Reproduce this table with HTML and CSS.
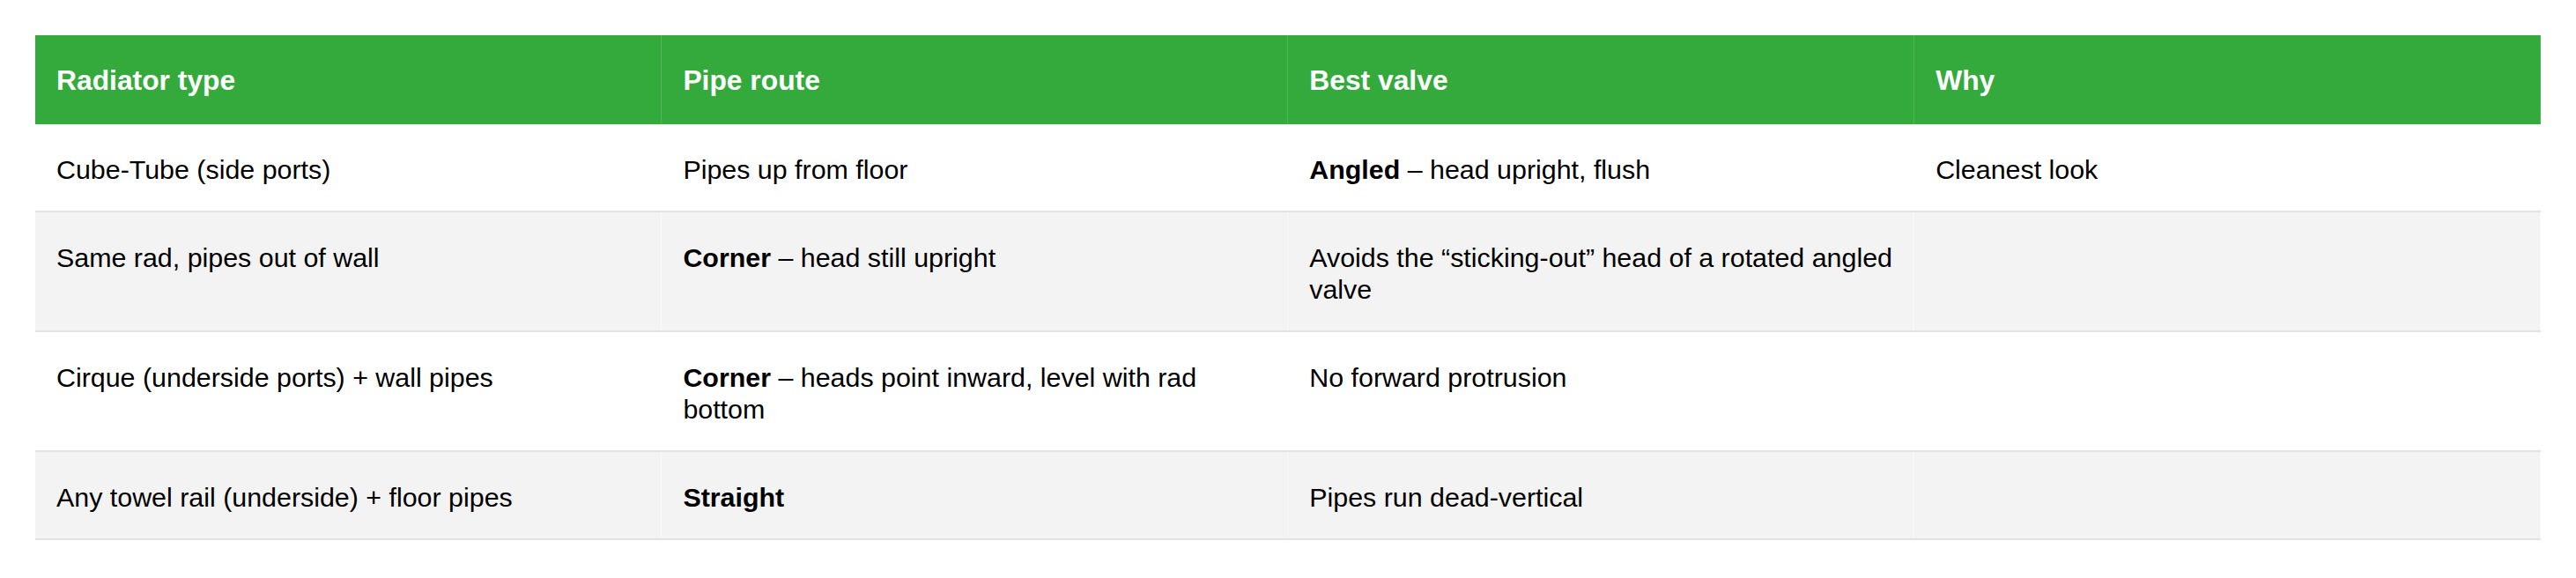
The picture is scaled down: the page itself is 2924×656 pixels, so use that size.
FILE: index.html
```html
<!DOCTYPE html>
<html lang="en">
<head>
<meta charset="utf-8">
<title>Radiator valves</title>
<link rel="stylesheet" href="styles.css">
</head>
<body>
<div class="wrap">
<table class="valves">
  <thead>
    <tr>
      <th>Radiator type</th>
      <th>Pipe route</th>
      <th>Best valve</th>
      <th>Why</th>
    </tr>
  </thead>
  <tbody>
    <tr>
      <td>Cube-Tube (side ports)</td>
      <td>Pipes up from floor</td>
      <td><strong>Angled</strong> – head upright, flush</td>
      <td>Cleanest look</td>
    </tr>
    <tr>
      <td>Same rad, pipes out of wall</td>
      <td><strong>Corner</strong> – head still upright</td>
      <td>Avoids the “sticking-out” head of a rotated angled valve</td>
      <td></td>
    </tr>
    <tr>
      <td>Cirque (underside ports) + wall pipes</td>
      <td><strong>Corner</strong> – heads point inward, level with rad bottom</td>
      <td>No forward protrusion</td>
      <td></td>
    </tr>
    <tr>
      <td>Any towel rail (underside) + floor pipes</td>
      <td><strong>Straight</strong></td>
      <td>Pipes run dead-vertical</td>
      <td></td>
    </tr>
  </tbody>
</table>
</div>
</body>
</html>
```

FILE: styles.css
```css
html, body {
  margin: 0;
  padding: 0;
  background: #ffffff;
}

.wrap {
  padding: 40px;
}

.valves {
  width: 2844px;
  table-layout: fixed;
  border-collapse: collapse;
  border-spacing: 0;
  font-family: "Liberation Sans", Arial, sans-serif;
  color: #000;
}

.valves th {
  background: #34aa3d;
  color: #fff;
  font-weight: bold;
  font-size: 31.8px;
  line-height: 38px;
  text-align: left;
  padding: 32px 24px 31px;
  border-right: 1px solid rgba(255, 255, 255, 0.14);
  vertical-align: top;
}

.valves td {
  font-size: 30.4px;
  line-height: 36px;
  padding: 33px 24px 29px;
  vertical-align: top;
  border-bottom: 2px solid #e2e2e2;
  border-right: 1px solid rgba(255, 255, 255, 0.5);
}

.valves tbody tr:nth-child(even) td {
  background: #f3f3f3;
}

.valves strong {
  font-weight: bold;
}
```
